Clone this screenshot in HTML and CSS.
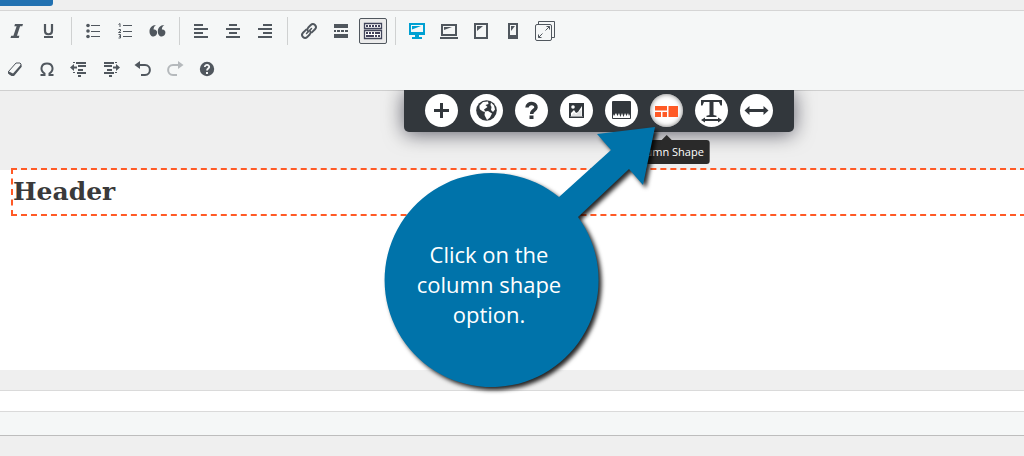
FILE: index.html
```html
<!DOCTYPE html>
<html lang="en">
<head>
<meta charset="utf-8">
<title>Editor</title>
<link rel="stylesheet" href="styles.css">
</head>
<body>
<div class="tabstrip"><div class="media-button"></div></div>
<header class="toolbar">
  <div class="row">
    <button class="tool" aria-label="Italic"><svg viewBox="0 0 20 20"><path d="M8 3h8l-.7 2.300h-2.200L10 14.700h2.400l-.7 2.300H3.500l.7-2.300h2.200L9.600 5.300H7.300z"/></svg></button>
    <button class="tool" aria-label="Underline"><svg viewBox="0 0 20 20"><path d="M6 3v6.500c0 5 7 5 7 0V3" fill="none" stroke="currentColor" stroke-width="2.200"/><path d="M5 15h9v2H5z"/></svg></button>
    <span class="separator"></span>
    <button class="tool" aria-label="Bulleted list"><svg viewBox="0 0 20 20"><circle cx="5" cy="4.500" r="1.800"/><circle cx="5" cy="10" r="1.800"/><circle cx="5" cy="15.500" r="1.800"/><path d="M8 4h9v1H8zM8 10h9v1H8zM8 15h9v1H8z"/></svg></button>
    <button class="tool" aria-label="Numbered list"><svg viewBox="0 0 20 20"><path d="M8 4h9v1H8zM8 10h9v1H8zM8 15h9v1H8z"/><path d="M3.500 3.500L5 2.500V6M3.500 8.500h2v1.500l-2 1.500h2.500M3.500 13.500h2v3.500h-2M4 15.200h1.500" fill="none" stroke="currentColor"/></svg></button>
    <button class="tool" aria-label="Blockquote"><svg viewBox="0 0 20 20"><path d="M9 4C7.300 5.200 6.500 6.700 6.600 8.600c2.400-.2 3.500 1.200 3.500 3 0 2-1.500 3.900-3.500 3.900-2.600 0-4.100-2.500-4.100-5.100C2.500 7 4.800 4.100 9 4zM17.300 4c-1.700 1.200-2.500 2.700-2.400 4.600 2.400-.2 3.500 1.200 3.500 3 0 2-1.500 3.900-3.500 3.900-2.600 0-4.100-2.500-4.100-5.100 0-3.400 2.300-6.300 6.500-6.400z"/></svg></button>
    <span class="separator"></span>
    <button class="tool" aria-label="Align left"><svg viewBox="0 0 20 20"><path d="M3 3h9v2H3zM3 7h14v2H3zM3 11h9v2H3zM3 15h14v2H3z"/></svg></button>
    <button class="tool" aria-label="Align center"><svg viewBox="0 0 20 20"><path d="M6 3h8v2H6zM3 7h14v2H3zM6 11h8v2H6zM3 15h14v2H3z"/></svg></button>
    <button class="tool" aria-label="Align right"><svg viewBox="0 0 20 20"><path d="M8 3h9v2H8zM3 7h14v2H3zM8 11h9v2H8zM3 15h14v2H3z"/></svg></button>
    <span class="separator"></span>
    <button class="tool" aria-label="Insert link"><svg viewBox="0 0 20 20"><g transform="rotate(-45 10 10)" fill="none" stroke="currentColor" stroke-width="1.900" stroke-linecap="round"><path d="M9 7H4.500a3 3 0 0 0 0 6H8a3 3 0 0 0 2.800-2"/><path d="M11 13h4.500a3 3 0 0 0 0-6H12a3 3 0 0 0-2.800 2"/><path d="M6.500 10h7" stroke-width="1.500"/></g></svg></button>
    <button class="tool" aria-label="Read more"><svg viewBox="0 0 20 20"><path d="M3 3h14v4H3zM3 9h2v2H3zM6 9h3v2H6zM10 9h3v2h-3zM14 9h3v2h-3zM3 13h14v4H3z"/></svg></button>
    <button class="tool active" aria-label="Toolbar toggle" aria-pressed="true"><svg viewBox="0 0 20 20"><path d="M1.500 2.500h17v5h-17zM1.500 9.500h17v8h-17z" fill="#fff" stroke="#41445a" stroke-width="1.300"/><path fill="#41405a" d="M3 4h2v2H3zM6 4h2v2H6zM9 4h2v2H9zM12 4h2v2h-2zM15 4h2v2h-2zM3 11h2v2H3zM6 11h2v2H6zM9 11h2v2H9zM12 11h5v2h-5zM3 14h8v2H3zM12 14h2v2h-2zM15 14h2v2h-2z"/></svg></button>
    <span class="separator"></span>
    <button class="tool selected" aria-label="Desktop view"><svg viewBox="0 0 20 20"><path fill-rule="evenodd" d="M2 2h16v12h-6v2h3v2H5v-2h3v-2H2zM4 4v7h12V4z"/><path d="M5 5h9L5 8.500z"/></svg></button>
    <button class="tool" aria-label="Laptop view"><svg viewBox="0 0 20 20"><path fill-rule="evenodd" d="M2 3h16v12H2zM4 5v8h12V5z"/><path d="M5 6h8L5 9zM1 16h18v2H1z"/></svg></button>
    <button class="tool" aria-label="Tablet view"><svg viewBox="0 0 20 20"><path fill-rule="evenodd" d="M3 2h14v16H3zM5 4v12h10V4z"/><path d="M6 5h6l-6 5z"/></svg></button>
    <button class="tool" aria-label="Phone view"><svg viewBox="0 0 20 20"><path fill-rule="evenodd" d="M5 2h10v16H5zM7 4v10h6V4z"/><path d="M8 5h4L8 10z"/></svg></button>
    <button class="tool" aria-label="Expand"><svg viewBox="0 0 20 20"><g fill="none" stroke="currentColor"><rect x=".5" y="3.500" width="16" height="16" rx="1.500"/><path d="M3.500 3.500v-3h16v16h-3M3.500 16.500l4-4M10.500 9.500l4-4M3.500 13.500v3h3M11.500 5.500h3v3"/></g></svg></button>
  </div>
  <div class="row second">
    <button class="tool" aria-label="Clear formatting"><svg viewBox="0 0 20 20"><path d="M3.500 12.500L11 4h4l1 1v2.500L8.500 16l-3.500-.5z" fill="none" stroke="currentColor"/><path d="M3 12l5 2.500L16 5.500l.5 2.500L9 17H6.500L3 14.500z"/></svg></button>
    <button class="tool" aria-label="Special character"><svg viewBox="0 0 20 20"><path d="M3.500 16h4v-1.500C2.500 11 4 4.500 10 4.500s7.500 6.500 2.500 10V16h4" fill="none" stroke="currentColor" stroke-width="2"/></svg></button>
    <button class="tool" aria-label="Decrease indent"><svg viewBox="0 0 20 20"><path d="M4 3h2v1H4zM7 3h10v2H7zM9 6h8v2H9zM9 10h5v2H9zM8 13h9v2H8zM4 13h2v1H4zM9 16h3v2H9zM1 8.500L5 5v2.500h3v2H5V12z"/></svg></button>
    <button class="tool" aria-label="Increase indent"><svg viewBox="0 0 20 20"><path d="M3 3h10v2H3zM14 3h2v1h-2zM3 6h8v2H3zM6 10h5v2H6zM3 13h10v2H3zM14 13h2v1h-2zM8 16h3v2H8zM19 8.500L15 5v2.500h-3v2h3V12z"/></svg></button>
    <button class="tool" aria-label="Undo"><svg viewBox="0 0 20 20"><path d="M5 6h7c6.500 0 6.500 10 0 10H8" fill="none" stroke="currentColor" stroke-width="2"/><path d="M1.500 6L7 2v8z"/></svg></button>
    <button class="tool" aria-label="Redo" disabled><svg viewBox="0 0 20 20"><path d="M15 6H8C1.500 6 1.500 16 8 16h4" fill="none" stroke="currentColor" stroke-width="2"/><path d="M18.500 6L13 2v8z"/></svg></button>
    <button class="tool" aria-label="Help"><svg viewBox="0 0 20 20"><circle cx="10" cy="10" r="7.200"/><path d="M7.800 8c.2-3 4.700-2.500 4.400.1-.2 1.500-2.200 1.500-2.200 3.400" fill="none" stroke="#f5f7f7" stroke-width="1.800"/><path d="M9 13h2v2H9z" fill="#f5f7f7"/></svg></button>
  </div>
</header>
<main class="workspace">
  <section class="canvas">
    <div class="block"><h1>Header</h1></div>
  </section>
  <nav class="floating-bar" aria-label="Block options">
    <button class="round" aria-label="Add"><svg viewBox="0 0 33 33"><path d="M15 9h3v6h6v3h-6v6h-3v-6H9v-3h6z"/></svg></button>
    <button class="round" aria-label="Global"><svg viewBox="0 0 33 33"><circle cx="16.500" cy="16.500" r="10.300"/><path fill="#fff" d="M9.500 11.500l3.500-3.500 5-.5.5 2.500-3 1 2 2-3.500 2.500 1.500 2.500-2.500-.5-3-2-.5-1.500zM15 17.500l3-.5 4 2.500-2 4-3 2.500-1-2-1.500-3zM21 8.500l3 3 1 4-2 2.500-2-2 .5-3-1-2z"/></svg></button>
    <button class="round" aria-label="Help"><svg viewBox="0 0 33 33"><path d="M12 13.500c.2-5.500 9.500-5 9 .2-.3 2.800-4.500 2.500-4.300 6.300" fill="none" stroke="currentColor" stroke-width="3.500"/><path d="M14.500 21.500h4V25h-4z"/></svg></button>
    <button class="round" aria-label="Background image"><svg viewBox="0 0 33 33"><path fill-rule="evenodd" d="M9 9h15v15H9zM10.500 10.500v12h12v-12z"/><path d="M10 10h13v12H10z"/><path d="M11 22v-3l3-3 2 3 2-1 4-6v10z" fill="#fff"/><path d="M11 22l3-3.500 2 2 5.500-5V22z" fill="#32373c" opacity=".15"/><circle cx="13" cy="13" r="1.800" fill="#fff"/></svg></button>
    <button class="round" aria-label="Divider shape"><svg viewBox="0 0 33 33"><path d="M7.500 7.500h18v17h-18z" fill="#fff" stroke="currentColor"/><path d="M8 8h17v12l-1 2-1-3-1.500 3-1.500-3-1.500 4-1.500-4-1.500 4-1.500-4-1.500 3-1.500-3L9 22l-1-2z"/></svg></button>
    <div class="tip-anchor">
      <button class="round current" aria-label="Column Shape" aria-describedby="shape-tip"><svg viewBox="0 0 33 33"><path d="M5 12h12v4.500H5zM5 18h6v5H5zM12.500 18H17v5h-4.500zM18.500 12H28v11h-9.500z"/></svg></button>
      <div class="tooltip" id="shape-tip" role="tooltip">Column Shape</div>
    </div>
    <button class="round" aria-label="Text width"><svg viewBox="0 0 33 33"><path d="M6 6h21v5.500h-1.500L24 8h-5.500v13l3 .8V23h-10v-1.200l3-.8V8H9l-1.500 3.500H6zM6 26l4-2.500V25h13v-1.500l4 2.500-4 2.500V27H10v1.500z"/></svg></button>
    <button class="round" aria-label="Full width"><svg viewBox="0 0 33 33"><path d="M4.500 16.500L9.500 12v3h14v-3l5 4.500-5 4.500v-3h-14v3z"/></svg></button>
  </nav>
</main>
<div class="path-row"></div>
<footer class="status-row"></footer>
<aside class="callout">
  <svg class="callout-shape" viewBox="0 0 290 280" aria-hidden="true"><path d="M194 87L246 40L232 24L290 17L278 75L264 59L213 107A107 107 0 1 1 194 87Z"/></svg>
  <p>Click on the<br>column shape<br>option.</p>
</aside>
</body>
</html>
```
FILE: styles.css
```css
* { box-sizing: border-box; }
body {
  margin: 0;
  min-height: 100vh;
  position: relative;
  overflow: hidden;
  background: #efefef;
  font-family: "Open Sans", "Noto Sans", sans-serif;
}
button {
  padding: 0;
  border: 0;
  background: none;
  color: inherit;
  font: inherit;
}
svg { display: block; fill: currentColor; }
.tabstrip { height: 10px; }
.media-button {
  width: 53px;
  height: 6px;
  background: #2271b1;
  border-radius: 0 0 3px 0;
}
.toolbar {
  padding: 5px 0 6px;
  background: #f5f7f7;
  border-top: 1px solid #d5d5d5;
  border-bottom: 1px solid #cfcfcf;
  color: #50575e;
}
.row {
  display: flex;
  align-items: center;
  height: 30px;
  padding-left: 1px;
}
.second { margin: 8px 0 0 -2px; }
.tool {
  flex: none;
  width: 28px;
  height: 26px;
  margin: 0 2px;
  display: grid;
  place-items: center;
}
.tool svg { width: 20px; height: 20px; }
.tool:disabled { color: #b5b9bc; }
.active {
  border: 1px solid #50575e;
  border-radius: 2px;
  background: #ebebeb;
}
.selected { color: #00a0d2; }
.separator {
  flex: none;
  width: 1px;
  height: 28px;
  margin: 0 5px 0 6px;
  background: #cfd1d1;
}
.workspace {
  position: relative;
  padding-top: 79px;
  padding-bottom: 20px;
}
.canvas {
  display: flow-root;
  height: 200px;
  background: #fff;
  padding-left: 11px;
}
.block {
  margin: -2px -12px 0 0;
  border: 2px dashed #ff5a26;
}
h1 {
  margin: 0;
  color: #3a3a3a;
  font: bold 25px/44px "DejaVu Serif", serif;
}
.floating-bar {
  position: absolute;
  top: -1px;
  left: 404px;
  display: flex;
  gap: 12px;
  padding: 4px 21px 5px;
  background: #32373c;
  border-radius: 0 0 5px 5px;
  box-shadow: 0 2px 20px rgba(0, 0, 20, .6);
  clip-path: inset(0 -40px -80px -40px);
  color: #32373c;
}
.round {
  width: 33px;
  height: 33px;
  border-radius: 50%;
  background: #fff;
}
.current { color: #ff5a26; box-shadow: inset 0 0 5px #777; }
.tip-anchor { position: relative; display: flex; }
.tooltip {
  position: absolute;
  top: 46px;
  left: 50%;
  transform: translateX(-50%);
  padding: 0 6px;
  border-radius: 3px;
  background: #2a2a2a;
  color: #fff;
  font-size: 11px;
  line-height: 24px;
  white-space: nowrap;
}
.tooltip::before {
  content: "";
  position: absolute;
  top: -5px;
  left: 50%;
  margin-left: -5px;
  border: solid transparent;
  border-width: 0 5px 5px;
  border-bottom-color: #2a2a2a;
}
.path-row {
  height: 21px;
  background: #fff;
  border-top: 1px solid #dadada;
}
.status-row {
  height: 25px;
  background: #f5f7f7;
  border-top: 1px solid #dadada;
  border-bottom: 1px solid #bdbdbd;
}
.callout {
  position: absolute;
  top: 110px;
  left: 365px;
  width: 290px;
  height: 280px;
  color: #fff;
}
.callout-shape {
  width: 100%;
  overflow: visible;
  fill: #0073aa;
  filter: drop-shadow(3px 3px 2px rgba(0, 0, 0, .85));
}
.callout p {
  position: absolute;
  top: 129px;
  left: 17px;
  width: 214px;
  margin: 0;
  font-size: 22px;
  line-height: 30px;
  text-align: center;
}
```
